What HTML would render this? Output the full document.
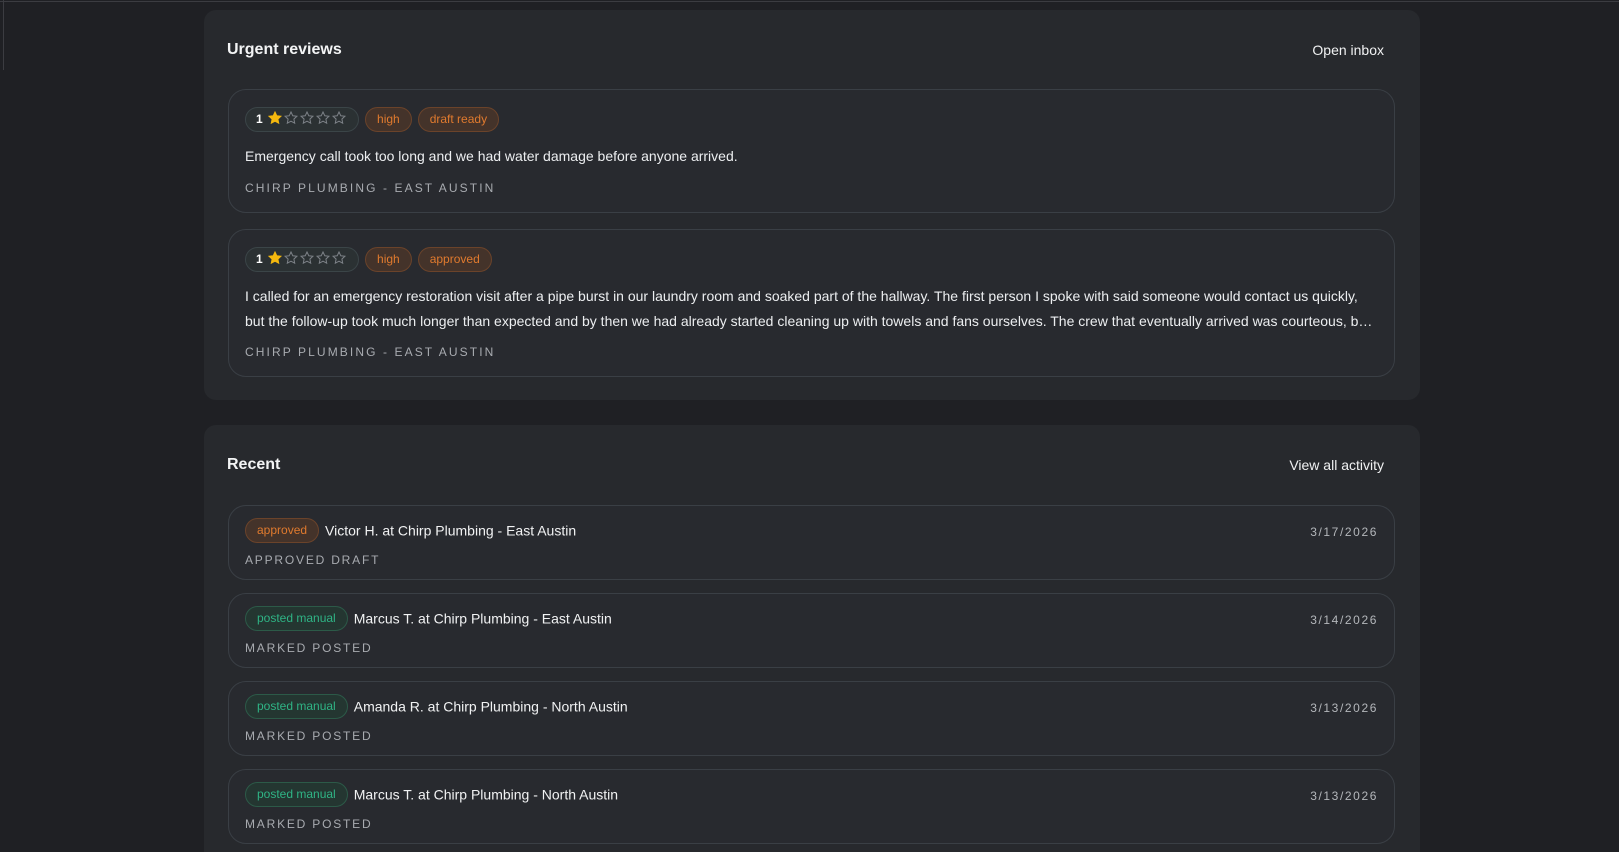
<!DOCTYPE html>
<html><head><meta charset="utf-8"><style>
*{box-sizing:border-box;margin:0;padding:0}
html,body{width:1619px;height:852px;overflow:hidden}
body{background:#1f2024;font-family:"Liberation Sans",sans-serif;color:#e8e9eb;position:relative}
.topline{position:absolute;left:0;top:1px;width:1619px;height:1px;background:#3b3c41}
.vline{position:absolute;left:3px;top:0;width:1px;height:70px;background:#3b3c41}
.card{position:absolute;left:204px;width:1216px;background:#27292d;border-radius:12px}
.h{position:absolute;left:23px;font-size:16px;font-weight:bold;color:#f3f4f5}
.link{position:absolute;right:36px;font-size:14px;color:#f0f1f2}
.item{position:absolute;left:24px;width:1167px;border:1px solid #3a3f45;border-radius:18px;background:#282a2f}
.pill{display:inline-block;height:25px;line-height:23px;border-radius:13px;font-size:12px;padding:0 11px;border:1px solid;vertical-align:middle}
.or{color:#e07a2e;background:#44332a;border-color:#6b432a}
.gr{color:#2fb485;background:#243631;border-color:#2c5a48}
.rate{color:#fff;background:#2b3133;border-color:#3b4548;padding:0 8px 0 10px;font-weight:bold}
.rate svg{vertical-align:-2px;margin-left:2px}
.row{position:absolute;left:16px;top:17px;white-space:nowrap}
.row .pill{margin-right:6px}
.txt{font-size:14px;color:#eceef0;line-height:24.5px}
.caps{font-size:12px;letter-spacing:2.1px;color:#a8abb0;text-transform:uppercase}
.caps2{font-size:12px;letter-spacing:1.8px;color:#a8abb0;text-transform:uppercase}
.date{position:absolute;right:16px;top:19px;font-size:12px;letter-spacing:1.6px;color:#b4b7bb}
.name{font-size:14px;color:#f1f2f3;vertical-align:middle;margin-left:0}
</style></head><body>
<div class="topline"></div><div class="vline"></div>

<div class="card" style="top:10px;height:390px">
  <div class="h" style="top:31px">Urgent reviews</div>
  <div class="link" style="top:32px">Open inbox</div>
  <div class="item" style="top:79px;height:124px">
    <div class="row"><span class="pill rate">1 <svg width="82" height="14" viewBox="0 0 82 14"><g stroke-width="1"><path d="M7 1l1.8 3.8 4.1.5-3 2.8.8 4.1L7 10.2 3.3 12.2l.8-4.1-3-2.8 4.1-.5z" fill="#f5b90f" stroke="#f5b90f"/><path transform="translate(16 0)" d="M7 1l1.8 3.8 4.1.5-3 2.8.8 4.1L7 10.2 3.3 12.2l.8-4.1-3-2.8 4.1-.5z" fill="none" stroke="#7d8288"/><path transform="translate(32 0)" d="M7 1l1.8 3.8 4.1.5-3 2.8.8 4.1L7 10.2 3.3 12.2l.8-4.1-3-2.8 4.1-.5z" fill="none" stroke="#7d8288"/><path transform="translate(48 0)" d="M7 1l1.8 3.8 4.1.5-3 2.8.8 4.1L7 10.2 3.3 12.2l.8-4.1-3-2.8 4.1-.5z" fill="none" stroke="#7d8288"/><path transform="translate(64 0)" d="M7 1l1.8 3.8 4.1.5-3 2.8.8 4.1L7 10.2 3.3 12.2l.8-4.1-3-2.8 4.1-.5z" fill="none" stroke="#7d8288"/></g></svg></span><span class="pill or">high</span><span class="pill or">draft ready</span></div>
    <div class="txt" style="position:absolute;left:16px;top:54px">Emergency call took too long and we had water damage before anyone arrived.</div>
    <div class="caps" style="position:absolute;left:16px;top:91px">Chirp Plumbing - East Austin</div>
  </div>
  <div class="item" style="top:219px;height:148px">
    <div class="row"><span class="pill rate">1 <svg width="82" height="14" viewBox="0 0 82 14"><g stroke-width="1"><path d="M7 1l1.8 3.8 4.1.5-3 2.8.8 4.1L7 10.2 3.3 12.2l.8-4.1-3-2.8 4.1-.5z" fill="#f5b90f" stroke="#f5b90f"/><path transform="translate(16 0)" d="M7 1l1.8 3.8 4.1.5-3 2.8.8 4.1L7 10.2 3.3 12.2l.8-4.1-3-2.8 4.1-.5z" fill="none" stroke="#7d8288"/><path transform="translate(32 0)" d="M7 1l1.8 3.8 4.1.5-3 2.8.8 4.1L7 10.2 3.3 12.2l.8-4.1-3-2.8 4.1-.5z" fill="none" stroke="#7d8288"/><path transform="translate(48 0)" d="M7 1l1.8 3.8 4.1.5-3 2.8.8 4.1L7 10.2 3.3 12.2l.8-4.1-3-2.8 4.1-.5z" fill="none" stroke="#7d8288"/><path transform="translate(64 0)" d="M7 1l1.8 3.8 4.1.5-3 2.8.8 4.1L7 10.2 3.3 12.2l.8-4.1-3-2.8 4.1-.5z" fill="none" stroke="#7d8288"/></g></svg></span><span class="pill or">high</span><span class="pill or">approved</span></div>
    <div class="txt" style="position:absolute;left:16px;top:54px;width:1130px;height:49px;overflow:hidden;display:-webkit-box;-webkit-line-clamp:2;-webkit-box-orient:vertical">I called for an emergency restoration visit after a pipe burst in our laundry room and soaked part of the hallway. The first person I spoke with said someone would contact us quickly, but the follow-up took much longer than expected and by then we had already started cleaning up with towels and fans ourselves. The crew that eventually arrived was courteous, but the whole experience left us frustrated.</div>
    <div class="caps" style="position:absolute;left:16px;top:115px">Chirp Plumbing - East Austin</div>
  </div>
</div>

<div class="card" style="top:425px;height:440px">
  <div class="h" style="top:31px">Recent</div>
  <div class="link" style="top:32px">View all activity</div>
  <div class="item" style="top:80px;height:75px">
    <div class="row" style="top:12px"><span class="pill or">approved</span><span class="name">Victor H. at Chirp Plumbing - East Austin</span></div>
    <div class="date">3/17/2026</div>
    <div class="caps2" style="position:absolute;left:16px;top:47px">Approved draft</div>
  </div>
  <div class="item" style="top:168px;height:75px">
    <div class="row" style="top:12px"><span class="pill gr">posted manual</span><span class="name">Marcus T. at Chirp Plumbing - East Austin</span></div>
    <div class="date">3/14/2026</div>
    <div class="caps2" style="position:absolute;left:16px;top:47px">Marked posted</div>
  </div>
  <div class="item" style="top:256px;height:75px">
    <div class="row" style="top:12px"><span class="pill gr">posted manual</span><span class="name">Amanda R. at Chirp Plumbing - North Austin</span></div>
    <div class="date">3/13/2026</div>
    <div class="caps2" style="position:absolute;left:16px;top:47px">Marked posted</div>
  </div>
  <div class="item" style="top:344px;height:75px">
    <div class="row" style="top:12px"><span class="pill gr">posted manual</span><span class="name">Marcus T. at Chirp Plumbing - North Austin</span></div>
    <div class="date">3/13/2026</div>
    <div class="caps2" style="position:absolute;left:16px;top:47px">Marked posted</div>
  </div>
</div>
</body></html>
